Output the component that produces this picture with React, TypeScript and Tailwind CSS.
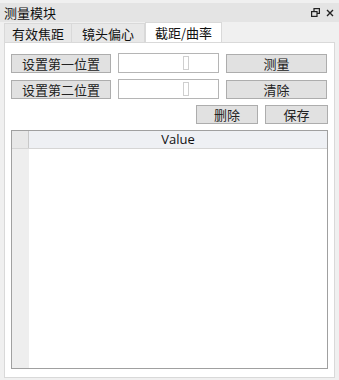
const Btn = ({ label, w }: { label: string; w: string }) => (
  <button
    className={`${w} h-[19px] bg-[#e1e1e1] border border-[#adadad] text-[13px] leading-none text-[#222] flex items-center justify-center`}
  >
    {label}
  </button>
);

const Field = () => (
  <div className="w-[101px] h-[20px] bg-white border border-[#b5b5b5] flex items-center justify-center">
    <div className="ml-[34px] w-[6px] h-[14px] border border-[#cfcfcf]" />
  </div>
);

const App = () => {
  return (
    <div
      className="w-[339px] h-[380px] bg-[#f0f0f0] flex flex-col text-[#111]"
      style={{ fontFamily: '"Noto Sans CJK SC", "Noto Sans", sans-serif' }}
    >
      {/* title bar */}
      <div className="mt-[3px] h-[19px] bg-[#e4e4e4] flex items-center pl-[4px] pr-[5px]">
        <span className="text-[13px] leading-none">测量模块</span>
        <div className="ml-auto flex items-center gap-[6px]">
          <svg width="9" height="9" viewBox="0 0 9 9" fill="none" stroke="#222" strokeWidth="1.2">
            <rect x="3" y="0.6" width="5.4" height="4.8" />
            <rect x="0.6" y="3.6" width="5.4" height="4.8" fill="#e4e4e4" />
          </svg>
          <svg width="8" height="8" viewBox="0 0 8 8" stroke="#222" strokeWidth="1.4">
            <path d="M1 1 L7 7 M7 1 L1 7" />
          </svg>
        </div>
      </div>

      {/* tabs */}
      <div className="h-[20px] flex items-end pl-[4px] text-[13px] leading-none">
        <div className="w-[68px] h-[19px] bg-[#e8e8e8] border border-b-0 border-[#d9d9d9] flex items-center justify-center">有效焦距</div>
        <div className="w-[73px] h-[19px] bg-[#e8e8e8] border border-b-0 border-l-0 border-[#d9d9d9] flex items-center justify-center">镜头偏心</div>
        <div className="w-[77px] h-[20px] bg-white border border-b-0 border-[#d9d9d9] flex items-center justify-center">截距/曲率</div>
      </div>

      {/* panel */}
      <div className="mx-[4px] mb-[2px] flex-1 bg-white border border-[#d9d9d9] flex flex-col px-[6px] pt-[10px] pb-[8px]">
        <div className="flex items-center gap-[7px]">
          <Btn label="设置第一位置" w="w-[100px]" />
          <Field />
          <Btn label="测量" w="w-[101px]" />
        </div>
        <div className="mt-[6px] flex items-center gap-[7px]">
          <Btn label="设置第二位置" w="w-[100px]" />
          <Field />
          <Btn label="清除" w="w-[101px]" />
        </div>
        <div className="mt-[6px] flex justify-end gap-[7px]">
          <Btn label="删除" w="w-[62px]" />
          <Btn label="保存" w="w-[63px]" />
        </div>

        {/* table */}
        <div className="mt-[6px] flex-1 border border-[#a0a0a0] flex flex-col">
          <div className="h-[18px] flex bg-[#eef0f4] border-b border-[#d5d5d5]">
            <div className="w-[17px] border-r border-[#c8c8c8] bg-[#e8e8e8]" />
            <div
              className="flex-1 flex items-center justify-center text-[13px] leading-none"
              style={{ fontFamily: '"Open Sans", "Noto Sans", sans-serif' }}
            >
              Value
            </div>
          </div>
          <div className="flex-1 flex">
            <div className="w-[17px] bg-[#eeeeee]" />
            <div className="flex-1 bg-white" />
          </div>
        </div>
      </div>
    </div>
  );
};

export default App;
